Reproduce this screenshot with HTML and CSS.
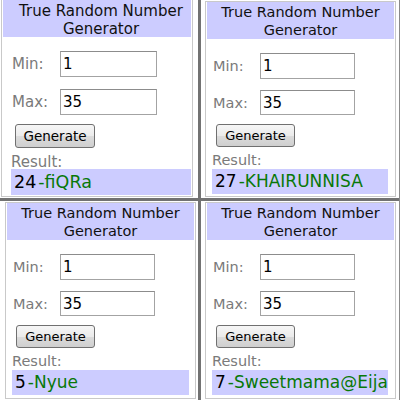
FILE: index.html
```html
<!DOCTYPE html>
<html>
<head>
<meta charset="utf-8">
<link rel="stylesheet" href="styles.css">
</head>
<body>
<div class="collage">
  <div class="cell cell-tl">
    <div class="widget widget-lg">
      <div class="title">True Random Number<br>Generator</div>
      <div class="form">
        <div class="row"><span class="label">Min:</span><span class="input">1</span></div>
        <div class="row"><span class="label">Max:</span><span class="input">35</span></div>
        <div class="btn-row"><span class="button">Generate</span></div>
        <div class="result-label">Result:</div>
        <div class="result"><span class="num">24</span><span class="name">-fiQRa</span></div>
      </div>
    </div>
  </div>
  <div class="cell cell-tr">
    <div class="widget">
      <div class="title">True Random Number<br>Generator</div>
      <div class="form">
        <div class="row"><span class="label">Min:</span><span class="input">1</span></div>
        <div class="row"><span class="label">Max:</span><span class="input">35</span></div>
        <div class="btn-row"><span class="button">Generate</span></div>
        <div class="result-label">Result:</div>
        <div class="result"><span class="num">27</span><span class="name">-KHAIRUNNISA</span></div>
      </div>
    </div>
  </div>
  <div class="cell cell-bl">
    <div class="widget">
      <div class="title">True Random Number<br>Generator</div>
      <div class="form">
        <div class="row"><span class="label">Min:</span><span class="input">1</span></div>
        <div class="row"><span class="label">Max:</span><span class="input">35</span></div>
        <div class="btn-row"><span class="button">Generate</span></div>
        <div class="result-label">Result:</div>
        <div class="result result-bl"><span class="num">5</span><span class="name">-Nyue</span></div>
      </div>
    </div>
  </div>
  <div class="cell cell-br">
    <div class="widget">
      <div class="title">True Random Number<br>Generator</div>
      <div class="form">
        <div class="row"><span class="label">Min:</span><span class="input">1</span></div>
        <div class="row"><span class="label">Max:</span><span class="input">35</span></div>
        <div class="btn-row"><span class="button">Generate</span></div>
        <div class="result-label">Result:</div>
        <div class="result"><span class="num">7</span><span class="name">-Sweetmama@Eija</span></div>
      </div>
    </div>
  </div>
</div>
</body>
</html>
```
FILE: styles.css
```css
html, body {
  margin: 0;
  padding: 0;
  background: #ffffff;
}

.collage {
  width: 400px;
  height: 400px;
  box-sizing: border-box;
  display: grid;
  grid-template-columns: 198px 198px;
  grid-template-rows: 198px 199px;
  gap: 3px;
  background: #727272;
  border-right: 1px solid #8a8a8a;
  font-family: "DejaVu Sans", Verdana, sans-serif;
  color: #000;
}

.cell {
  background: #ffffff;
  box-sizing: border-box;
  overflow: hidden;
}

.cell-tl { padding: 0 5px 1px 1px; }
.cell-tr { padding: 1px 3px 1px 4px; }
.cell-bl { padding: 1px 2px 1px 5px; }
.cell-br { padding: 1px 3px 1px 4px; }

.widget {
  border: 1px solid #c9c9c9;
  padding: 0 1px 0 1px;
  height: 100%;
  box-sizing: border-box;
}

.cell-tl .widget { border-top: none; }

.title {
  background: #ccccff;
  height: 37px;
  box-sizing: border-box;
  padding-top: 2px;
  font-size: 14.5px;
  line-height: 17.5px;
  text-align: center;
  color: #111;
}

.widget-lg .title {
  font-size: 15px;
  line-height: 18px;
  padding-left: 8px;
}

.form {
  padding: 14px 0 0 5px;
}

.widget-lg .form { padding-left: 8px; }

.row {
  display: flex;
  align-items: center;
  height: 26px;
  margin-bottom: 11px;
}

.row + .row { height: 25px; margin-bottom: 0; }

.widget-lg .row { margin-bottom: 12px; }
.widget-lg .row + .row { height: 26px; margin-bottom: 0; }

.label {
  width: 48px;
  padding-left: 1px;
  box-sizing: border-box;
  font-size: 14.5px;
  color: #7a7a7a;
}

.widget-lg .label { width: 49px; font-size: 15px; }

.input {
  width: 95px;
  height: 100%;
  box-sizing: border-box;
  border: 1px solid #a3a3a3;
  border-top-color: #8c8c8c;
  padding-left: 2px;
  display: flex;
  align-items: center;
  font-size: 15px;
  color: #000;
}

.widget-lg .input { width: 97px; }

.btn-row {
  margin-top: 9px;
  padding-left: 4px;
}

.button {
  display: inline-flex;
  align-items: center;
  justify-content: center;
  width: 79px;
  height: 23px;
  box-sizing: border-box;
  border: 1px solid #707070;
  border-radius: 3px;
  background: linear-gradient(#f6f6f6 0%, #ebebeb 50%, #dcdcdc 51%, #cfcfcf 100%);
  font-size: 13px;
  color: #000;
}

.widget-lg .button { width: 80px; height: 24px; font-size: 13.5px; }

.result-label {
  margin-top: 6px;
  font-size: 14.5px;
  line-height: 15px;
  color: #7a7a7a;
}

.widget-lg .result-label { margin-top: 8px; line-height: 13px; font-size: 15px; }

.result {
  margin-top: 1px;
  margin-right: 6px;
  height: 25px;
  line-height: 25px;
  background: #ccccff;
  padding-left: 3px;
  font-size: 17px;
  white-space: nowrap;
}

.widget-lg .result {
  margin-top: 0;
  margin-right: 0;
  height: 26px;
  line-height: 26px;
  font-size: 17.5px;
}

.result-bl { margin-right: 5px; }

.num { color: #000; margin-right: 2px; }
.name { color: #087808; }
```
